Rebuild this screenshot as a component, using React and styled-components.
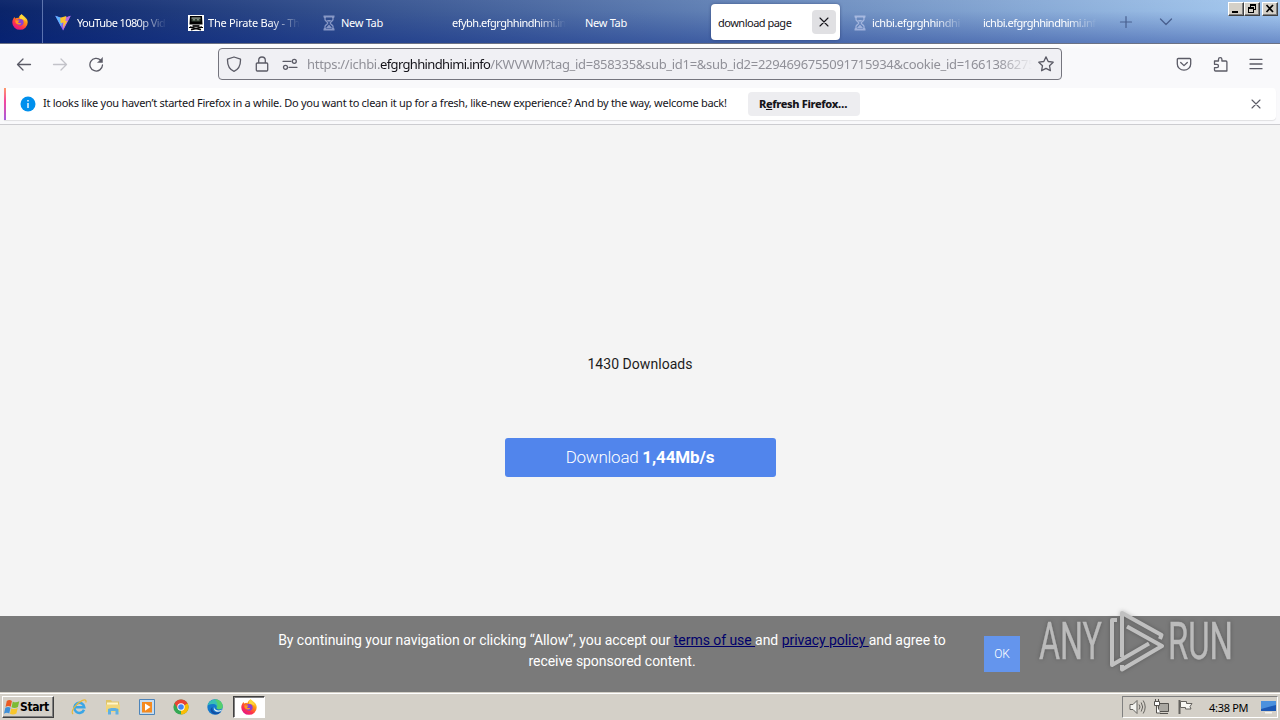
import React from "react";
import styled, { createGlobalStyle, css } from "styled-components";

const GlobalStyle = createGlobalStyle`
  * { box-sizing: border-box; }
  html, body { margin: 0; padding: 0; background: #f4f4f4; }
  body { overflow: hidden; }
`;

const uiFont = '"Noto Sans", "Open Sans", sans-serif';

const Screen = styled.div`
  position: relative;
  width: 1280px;
  height: 720px;
  display: flex;
  flex-direction: column;
  overflow: hidden;
  font-family: ${uiFont};
  font-size: 11px;
  color: #15141a;
`;

const TabStrip = styled.header`
  height: 44px;
  flex: none;
  display: flex;
  border-bottom: 1px solid #6c7284;
  background:
    linear-gradient(180deg, rgba(255, 255, 255, 0.03) 0%, rgba(0, 20, 110, 0) 25%, rgba(0, 30, 130, 0.36) 100%),
    linear-gradient(90deg, #0a246a 0%, #a6caf0 100%);
`;

const PinnedTab = styled.div`
  width: 43px;
  height: 43px;
  padding: 14px 0 0 12px;
  border-right: 1px solid rgba(170, 190, 235, 0.5);
`;

const Tab = styled.div`
  width: 133px;
  height: 43px;
  display: flex;
  align-items: center;
  padding: 2px 9px 0 ${(p) => (p.$icon ? 12 : 10)}px;
  gap: ${(p) => p.$gap || 4}px;
  color: #fff;
  white-space: nowrap;
  overflow: hidden;
`;

const TabLabel = styled.span`
  flex: 1;
  overflow: hidden;
  line-height: 18px;
  letter-spacing: ${(p) => p.$ls || 0}px;
  ${(p) =>
    p.$fade &&
    css`
      mask-image: linear-gradient(90deg, #000 calc(100% - 30px), transparent 100%);
    `}
`;

const ActiveTab = styled.div`
  width: 129px;
  height: 36px;
  margin: 4px 0 0 3px;
  padding: 0 4px 0 7px;
  display: flex;
  align-items: center;
  justify-content: space-between;
  background: #fff;
  color: #15141a;
  border-radius: 4px;
  letter-spacing: -0.5px;
  box-shadow: 0 0 3px rgba(20, 30, 80, 0.5);
`;

const TabClose = styled.div`
  width: 24px;
  height: 24px;
  display: grid;
  place-items: center;
  border-radius: 4px;
  background: #e0e0e3;
`;

const StripButton = styled.div`
  width: 40px;
  height: 43px;
  display: grid;
  place-items: center;
  padding-top: 1px;
`;

const WindowButtons = styled.div`
  margin: 2px 2px 0 auto;
  display: flex;
  height: 14px;
`;

const WindowButton = styled.div`
  width: 16px;
  height: 14px;
  margin-left: ${(p) => (p.$apart ? 2 : 0)}px;
  background: #d4d0c8;
  border: 1px solid;
  border-color: #fff #404040 #404040 #fff;
  box-shadow: inset -1px -1px #808080;
  svg { display: block; }
`;

const Toolbar = styled.nav`
  height: 44px;
  flex: none;
  display: flex;
  align-items: center;
  padding: 0 16px 4px;
  background: linear-gradient(180deg, #fff 0, #f9f9fb 5px);
  color: #5b5b66;
`;

const NavButtons = styled.div`
  width: 202px;
  display: flex;
  gap: 20px;
`;

const UrlBar = styled.div`
  width: 844px;
  height: 32px;
  display: flex;
  align-items: center;
  padding: 0 7px;
  background: #f0f0f4;
  border: 1px solid #75757e;
  border-radius: 4px;
`;

const UrlIcons = styled.div`
  display: flex;
  gap: 12px;
  width: 81px;
  flex: none;
`;

const UrlText = styled.div`
  flex: 1;
  margin-right: 6px;
  overflow: hidden;
  white-space: nowrap;
  font-size: 13px;
  line-height: 20px;
  color: #909098;
  letter-spacing: ${(p) => p.$ls}px;
  mask-image: linear-gradient(90deg, #000 calc(100% - 34px), transparent 100%);
  b { font-weight: 400; color: #15141a; letter-spacing: -0.65px; }
`;

const ToolbarActions = styled.div`
  margin-left: auto;
  display: flex;
  gap: 20px;
`;

const Notification = styled.section`
  height: 37px;
  flex: none;
  padding: 0 4px 4px;
  background: #f9f9fb;
  border-bottom: 1px solid #ccccd0;
`;

const NotificationCard = styled.div`
  height: 32px;
  display: flex;
  align-items: center;
  background: #fff;
  border-radius: 0 4px 4px 0;
  box-shadow: 0 1px 1px rgba(0, 0, 0, 0.1);
`;

const AccentBar = styled.i`
  width: 2px;
  height: 32px;
  background: linear-gradient(180deg, #ff9a6a 0%, #f5479c 40%, #a55bdd 100%);
`;

const InfoBadge = styled.div`
  width: 16px;
  height: 16px;
  margin: 0 7px 0 14px;
  display: grid;
  place-items: center;
`;

const NoticeText = styled.span`
  width: 705px;
  padding-bottom: 3px;
  white-space: nowrap;
  letter-spacing: ${(p) => p.$ls}px;
`;

const RefreshButton = styled.button`
  width: 112px;
  height: 24px;
  padding: 0;
  border: 0;
  border-radius: 4px;
  background: #ededf0;
  color: #15141a;
  font: 800 11px/24px ${uiFont};
  letter-spacing: -0.35px;
  padding-right: 2px;
`;

const DismissButton = styled.div`
  width: 16px;
  height: 16px;
  margin: 0 12px 0 auto;
`;

const Page = styled.main`
  flex: 1;
  display: flex;
  flex-direction: column;
  align-items: center;
  background: #f4f4f4;
  font-family: Roboto, sans-serif;
`;

const DownloadCount = styled.p`
  margin: 229px 0 0;
  font-size: 14px;
  line-height: 20px;
  color: #1c1c1c;
  letter-spacing: 0.05px;
`;

const DownloadButton = styled.button`
  width: 271px;
  height: 39px;
  margin-top: 64px;
  padding: 0;
  border: 0;
  border-radius: 3px;
  background: #5185ec;
  color: #fff;
  font: 300 17px/39px Roboto, sans-serif;
  letter-spacing: -0.25px;
  b { font-weight: 700; letter-spacing: -0.12px; }
`;

const ConsentBar = styled.footer`
  height: 76px;
  margin-top: auto;
  width: 100%;
  display: flex;
  padding: 0 0 0 260px;
  background: #7a7a7a;
  color: #fff;
`;

const ConsentText = styled.p`
  width: 704px;
  margin: 14px 20px 0 0;
  text-align: center;
  font-size: 14px;
  line-height: 21px;
  letter-spacing: ${(p) => p.$ls}px;
  span { display: block; white-space: pre; }
  a { color: #00006a; text-decoration: underline; }
`;

const OkButton = styled.button`
  width: 36px;
  height: 36px;
  margin-top: 20px;
  padding: 0;
  border: 0;
  background: #6495ed;
  color: #fff;
  font: 300 12px/36px Roboto, sans-serif;
`;

const Watermark = styled.svg`
  position: absolute;
  left: 1030px;
  top: 604px;
  filter: drop-shadow(0 0 2px rgba(0, 0, 0, 0.25));
`;

const Taskbar = styled.div`
  height: 28px;
  flex: none;
  display: flex;
  align-items: center;
  padding: 1px 2px 0;
  background: #d4d0c8;
  border-top: 1px solid #d4d0c8;
  box-shadow: inset 0 1px #fff;
`;

const StartButton = styled.div`
  width: 52px;
  height: 22px;
  display: flex;
  align-items: center;
  padding-left: 1px;
  color: #000;
  font: 700 12px/18px "DejaVu Sans Condensed", "DejaVu Sans", sans-serif;
  letter-spacing: -0.4px;
  border: 1px solid;
  border-color: #fff #404040 #404040 #fff;
  box-shadow: inset -1px -1px #808080;
`;

const QuickLaunch = styled.div`
  display: flex;
  align-items: center;
  gap: 18px;
  margin: 0 10px 0 17px;
`;

const TaskButton = styled.div`
  width: 32px;
  height: 22px;
  display: grid;
  place-items: center;
  background: #fff;
  border: 1px solid;
  border-color: #404040 #fff #fff #404040;
  box-shadow: inset 1px 1px #808080;
`;

const Tray = styled.div`
  margin: 0 0 0 auto;
  width: 156px;
  height: 22px;
  display: flex;
  align-items: center;
  gap: 7px;
  padding-left: 6px;
  border: 1px solid;
  border-color: #808080 #fff #fff #808080;
  color: #000;
  font-size: 11px;
  letter-spacing: -0.3px;
  svg { flex: none; }
`;

const Clock = styled.span`
  margin-left: 8px;
  width: 44px;
  white-space: nowrap;
`;

const Line = ({ size = 16, width = 1.3, color = "currentColor", children, ...rest }) => (
  <svg width={size} height={size} viewBox="0 0 16 16" fill="none" stroke={color} strokeWidth={width} strokeLinecap="round" strokeLinejoin="round" {...rest}>
    {children}
  </svg>
);

const FirefoxIcon = ({ id }) => (
  <svg width="16" height="16" viewBox="0 0 16 16">
    <defs>
      <linearGradient id={id} x1="0.85" y1="0.05" x2="0.25" y2="0.95">
        <stop offset="0" stopColor="#fff44f" />
        <stop offset="0.35" stopColor="#ff980e" />
        <stop offset="0.7" stopColor="#ff3647" />
        <stop offset="1" stopColor="#e31587" />
      </linearGradient>
    </defs>
    <path d="M9.6 0.2c1 1 2.2 1.600 3 2.500C15 4.600 15.700 6.400 15.700 8.400a7.700 7.400 0 0 1-15.400 0C0.300 6 1.300 4.300 2.600 2.900l0.600 1.500 1.900-0.700 1.300 0.500C7 2.300 8.200 1 9.600 0.200z" fill={`url(#${id})`} />
    <circle cx="8.200" cy="8.300" r="3.400" fill="#8a3fd6" />
    <path d="M3.500 6.200l3.700 0.200c0.600 0.600-0.900 1.200-1.200 1.800 0.600 1.300 2.300 0.600 3.200 1-0.600 1.700-3.500 1.800-5 0.200C3.300 8.500 3.200 7 3.500 6.200z" fill="#ff9a1f" />
    <path d="M9.600 0.200c0.200 2.200 3.400 3 4 6.600C11.900 4.600 9 5.200 8 4.400 8 2.400 8.600 1 9.600 0.200z" fill="#ffd93b" />
  </svg>
);

const VividIcon = () => (
  <svg width="16" height="16" viewBox="0 0 16 16">
    <path d="M0.300 0.800L8 15.400 15.700 0.800 8 3.600z" fill="#8b62f0" />
    <path d="M8 3.600L15.700 0.800 8 15.400z" fill="#bd6bdc" />
    <path d="M0.300 0.800L8 3.600v2L6 11.600z" fill="#5cb5ff" />
    <path d="M5.300 2.800L11.400 1 10.300 6h2L8 13l0.600-5.500-3 0.600z" fill="#ffc52b" />
  </svg>
);

const PirateIcon = () => (
  <svg width="16" height="16" viewBox="0 0 16 16">
    <path d="M0 0h16v16H0z" fill="#fff" />
    <path d="M2 1h12l0.500 8.500h-13z" fill="#000" />
    <path d="M3.500 2.700h9v3.800h-9z" fill="#39463a" />
    <path d="M3.500 3h9" stroke="#cfd6cf" strokeWidth="0.800" />
    <path d="M5 4.800h2M9 4.800h2" stroke="#b8c0b8" strokeWidth="0.800" />
    <path d="M4.500 10h7v2h-7z" fill="#222" />
    <path d="M2 12l11 2.800M14 12L3 14.800" stroke="#000" strokeWidth="1.500" />
    <path d="M1 12.500h2M13 12.500h2" stroke="#000" />
  </svg>
);

const Hourglass = () => (
  <svg width="16" height="16" viewBox="0 0 16 16" fill="none" stroke="rgba(225,230,255,0.5)" strokeWidth="1.300">
    <path d="M2.500 1.500h11M2.500 14.500h11" strokeWidth="2" />
    <path d="M4 2v2.500c0 1.500 2.800 2.200 2.800 3.500S4 10 4 11.500V14M12 2v2.500c0 1.500-2.800 2.200-2.800 3.500S12 10 12 11.500V14" />
    <path d="M5.500 5h5L8 7zM8 9.500l3 3.500H5z" fill="rgba(225,230,255,0.5)" stroke="none" />
  </svg>
);

const tabsBefore = [
  { label: "YouTube 1080p Vid", icon: <VividIcon />, gap: 6, fade: true, spacing: -0.6 },
  { label: "The Pirate Bay - Th", icon: <PirateIcon />, fade: true, spacing: -0.22 },
  { label: "New Tab", icon: <Hourglass />, spacing: -0.3 },
  { label: "efybh.efgrghhindhimi.in", fade: true, spacing: -0.5 },
  { label: "New Tab", spacing: -0.3 },
];
const tabsAfter = [
  { label: "ichbi.efgrghhindhi", icon: <Hourglass />, fade: true, spacing: -0.4 },
  { label: "ichbi.efgrghhindhimi.inf", fade: true, spacing: -0.5 },
];

const TabItem = ({ tab }) => (
  <Tab $icon={!!tab.icon} $gap={tab.gap}>
    {tab.icon}
    <TabLabel $fade={tab.fade} $ls={tab.spacing}>{tab.label}</TabLabel>
  </Tab>
);

const IeIcon = () => (
  <svg width="16" height="16" viewBox="0 0 16 16" fill="none">
    <path d="M13 10.700A5 5 0 1 1 13.300 8.300H4.600" stroke="#3aa6e6" strokeWidth="2.500" />
    <path d="M2.200 15C-1 13.500 4 5 11 1.600c3-1.400 4.800-0.500 3.700 2" stroke="#e8b93a" strokeWidth="1.200" />
  </svg>
);

const FolderIcon = () => (
  <svg width="16" height="16" viewBox="0 0 16 16">
    <path d="M1 1h5l1 1.500h7V13H1z" fill="#dfc468" />
    <path d="M2 3.500h11v3H2z" fill="#fff6c9" />
    <path d="M1 5.500h14v7.500H1z" fill="#f0d67c" />
    <path d="M3 15.500v-5c0-2 10.500-2 10.500 0v5H10.500v-3.500h-4.500v3.500z" fill="#5fb0e2" />
  </svg>
);

const PlayerIcon = () => (
  <svg width="16" height="16" viewBox="0 0 16 16">
    <path d="M0.500 0.500h15v15H0.500z" fill="#c6dcf0" stroke="#4d84b9" />
    <path d="M3 3h10v10.500H3z" fill="#f58a1f" />
    <path d="M6 4.500L11.500 8 6 11.700z" fill="#fff" />
  </svg>
);

const ChromeIcon = () => (
  <svg width="16" height="16" viewBox="0 0 16 16">
    <circle cx="8" cy="8" r="7.600" fill="#34a853" />
    <path d="M8 8L1.420 4.200A7.600 7.600 0 0 1 14.580 4.200z" fill="#ea4335" />
    <path d="M8 8l6.580-3.800A7.600 7.600 0 0 1 8 15.600z" fill="#fbbc05" />
    <path d="M1.420 4.200L5 10l3-2 6.580-3.800z" fill="#ea4335" />
    <circle cx="8" cy="8" r="3.700" fill="#fff" />
    <circle cx="8" cy="8" r="2.800" fill="#4285f4" />
  </svg>
);

const EdgeIcon = () => (
  <svg width="16" height="16" viewBox="0 0 16 16">
    <circle cx="8" cy="8" r="7.700" fill="#1479cc" />
    <path d="M0.400 7A7.700 7.700 0 0 1 15.700 7.500C15.700 11 10 11 9.600 9c1-2-1-4.500-4-4C2.500 5 0.800 6 0.400 7z" fill="#38bfb4" />
    <path d="M8 0.300c5 0 8 4 7.700 7.400C15.500 11 10 11 9.600 9 12 5 9 2 8 0.300z" fill="#55cf6d" />
    <path d="M5.500 8c-1 4 3 7 8.500 4.500C11 17 4 16 3.500 11 3.500 9.500 4.500 8.500 5.500 8z" fill="#124fa5" />
    <path d="M7 8c0.300 3 4.500 4.500 8 2.500l-0.700 1.500C10 14 6 12 7 8z" fill="#e4eef3" />
  </svg>
);

const WindowsFlag = () => (
  <svg width="16" height="16" viewBox="0.500 1.200 15.500 13" preserveAspectRatio="none">
    <path d="M3.200 2.800C5 1.500 7 2 8.200 2.800L7 7.500C5.500 6.700 3.700 6.600 2 7.600z" fill="#ea5a24" />
    <path d="M9 3.200c2 1 4 0.900 6.300-0.200L14 7.700c-2 1-4.200 1.200-6.200 0.200z" fill="#7dbb35" />
    <path d="M1.800 8.400C3.500 7.400 5.500 7.500 6.800 8.300L5.600 13C4 12.200 2.200 12.300 0.500 13.200z" fill="#3f8fd8" />
    <path d="M7.600 8.700c2 1 4 0.900 6.200-0.200L12.500 13c-2 1-4.200 1.200-6.200 0.200z" fill="#f8c62b" />
  </svg>
);

export default function App() {
  return (
    <Screen>
      <GlobalStyle />
      <TabStrip>
        <PinnedTab><FirefoxIcon id="fx-pinned" /></PinnedTab>
        {tabsBefore.map((t, i) => <TabItem key={i} tab={t} />)}
        <ActiveTab>
          <span>download page</span>
          <TabClose>
            <Line width={1.1}><path d="M4 4l8 8M12 4l-8 8" /></Line>
          </TabClose>
        </ActiveTab>
        {tabsAfter.map((t, i) => <TabItem key={i} tab={t} />)}
        <StripButton>
          <Line color="#49608f" width={1.200}><path d="M8 2.500v11M2.500 8h11" /></Line>
        </StripButton>
        <StripButton>
          <Line color="#49608f" width={1.300}><path d="M2.500 5l5.500 5.500L13.500 5" /></Line>
        </StripButton>
        <WindowButtons>
          <WindowButton>
            <svg width="14" height="12"><path d="M3 8h6v2H3z" /></svg>
          </WindowButton>
          <WindowButton>
            <svg width="14" height="12" fill="none" stroke="#000" shapeRendering="crispEdges">
              <path d="M5 1h6v2H5z" fill="#000" stroke="none" />
              <path d="M5.500 3v1M10.500 3v3.500H9" />
              <path d="M3 4h6v2H3z" fill="#000" stroke="none" />
              <path d="M3.500 6v3.500h5V6" />
            </svg>
          </WindowButton>
          <WindowButton $apart>
            <svg width="14" height="12" stroke="#000" strokeWidth="1.700"><path d="M3.500 2l6.500 7M10 2L3.500 9" /></svg>
          </WindowButton>
        </WindowButtons>
      </TabStrip>

      <Toolbar>
        <NavButtons>
          <Line><path d="M14.500 8.500h-13M7 3L1.500 8.500 7 14" /></Line>
          <Line color="#c3c3c9"><path d="M1.500 8.500h13M9 3l5.500 5.500L9 14" /></Line>
          <Line>
            <path d="M14.500 9A6.300 6.300 0 1 1 12.700 4.300" />
            <path d="M14.500 1.800v4.700H9.800z" fill="currentColor" strokeWidth="0.500" />
          </Line>
        </NavButtons>
        <UrlBar>
          <UrlIcons>
            <Line><path d="M8 1L14.500 3.200C14.700 9 12.500 13.500 8 15.300 3.500 13.500 1.300 9 1.500 3.200z" /></Line>
            <Line><path d="M3.300 7h9.400a1 1 0 0 1 1 1v6a1 1 0 0 1-1 1H3.300a1 1 0 0 1-1-1V8a1 1 0 0 1 1-1zM4.700 7V4.300a3.300 3.300 0 0 1 6.600 0V7" /></Line>
            <Line><path d="M1 5.300h8M7 11.300h8" /><circle cx="12.300" cy="5.300" r="2" /><circle cx="3.500" cy="11.300" r="2" /></Line>
          </UrlIcons>
          <UrlText $ls={-0.3}>
            https://ichbi.<b>efgrghhindhimi.info</b>/KWVWM?tag_id=858335&amp;sub_id1=&amp;sub_id2=2294696755091715934&amp;cookie_id=1661386275
          </UrlText>
          <Line><path d="M8 0.900l2.200 4.600 5 0.700-3.700 3.500 0.900 5L8 12.400l-4.400 2.300 0.900-5L0.800 6.200l5-0.700z" /></Line>
        </UrlBar>
        <ToolbarActions>
          <Line>
            <path d="M2.300 2.500h11.400a1 1 0 0 1 1 1V8a6.700 6.200 0 0 1-13.400 0V3.500a1 1 0 0 1 1-1z" />
            <path d="M4.700 6.500L8 9.600l3.300-3.100" />
          </Line>
          <Line viewBox="-1 -0.500 16 16">
            <path d="M1.500 4.500h4V2.800a1.700 1.700 0 0 1 3.400 0v1.700h4a1 1 0 0 1 1 1v9H2.500a1 1 0 0 1-1-1v-2.300h2.300a1.700 1.700 0 0 0 0-3.400H1.500z" />
          </Line>
          <Line><path d="M2 3.300h12M2 8h12M2 12.700h12" /></Line>
        </ToolbarActions>
      </Toolbar>

      <Notification>
        <NotificationCard>
          <AccentBar />
          <InfoBadge>
            <svg width="16" height="16"><circle cx="8" cy="8" r="7.500" fill="#0090ed" /><path d="M8 7v5M8 4v1.500" stroke="#fff" strokeWidth="1.400" /></svg>
          </InfoBadge>
          <NoticeText $ls={-0.27}>
            It looks like you haven’t started Firefox in a while. Do you want to clean it up for a fresh, like-new experience? And by the way, welcome back!
          </NoticeText>
          <RefreshButton>R<u>e</u>fresh Firefox…</RefreshButton>
          <DismissButton>
            <Line color="#5b5b66" width={1.100}><path d="M4 4l8 8M12 4l-8 8" /></Line>
          </DismissButton>
        </NotificationCard>
      </Notification>

      <Page>
        <DownloadCount>1430 Downloads</DownloadCount>
        <DownloadButton>Download <b>1,44Mb/s</b></DownloadButton>
        <ConsentBar>
          <ConsentText $ls={-0.045}>
            <span>By continuing your navigation or clicking “Allow”, you accept our <a>terms of use </a>and <a>privacy policy </a>and agree to</span>
            <span>receive sponsored content.</span>
          </ConsentText>
          <OkButton>OK</OkButton>
        </ConsentBar>
      </Page>

      <Taskbar>
        <StartButton><WindowsFlag />Start</StartButton>
        <QuickLaunch>
          <IeIcon /><FolderIcon /><PlayerIcon /><ChromeIcon /><EdgeIcon />
        </QuickLaunch>
        <TaskButton><FirefoxIcon id="fx-task" /></TaskButton>
        <Tray>
          <svg width="17" height="16" viewBox="0 0 17 16" fill="#f4f4f0" stroke="#65635f" strokeWidth="1">
            <path d="M1 5.500h3l4-4v13l-4-4H1z" />
            <path d="M10 5.500q2 2.500 0 5M12.200 3.500q3 4.500 0 9M14.200 1.500q4 6.500 0 13" fill="none" />
          </svg>
          <svg width="17" height="16" viewBox="0 0 17 16" fill="#f4f4f0" stroke="#54524e">
            <path d="M5.500 4.500h10v8h-10z" fill="#a9a7a1" /><path d="M7 14.500h8" />
            <path d="M1.500 2.500h5v4h-5zM2.500 0v2M5.500 0v2M3.500 7v7h4" fill="#fff" />
          </svg>
          <svg width="17" height="16" viewBox="0 0 17 16" fill="#f7f7f3" stroke="#65635f">
            <path d="M2.500 1v14" strokeWidth="2" /><path d="M3.500 2.500h6v2h5.500l-2 3 1 2.500H8.500v-1.500h-5z" />
          </svg>
          <Clock>4:38 PM</Clock>
          <svg width="17" height="16" viewBox="0 0 17 16">
            <path d="M1 2h15v10H1z" fill="#1c58b4" /><path d="M1 2h15v4L1 10z" fill="#4b91de" /><path d="M5 13h7v1.500H5z" fill="#f4f4f0" />
          </svg>
        </Tray>
      </Taskbar>

      <Watermark width="220" height="76" viewBox="0 0 220 76" fill="#bbb">
        <g fontFamily="Roboto, sans-serif" fontSize="51" fontWeight="400" stroke="#bbb" strokeWidth="0.400">
          <text x="9" y="55" textLength="63" lengthAdjust="spacingAndGlyphs">ANY</text>
          <text x="138" y="55" textLength="65" lengthAdjust="spacingAndGlyphs">RUN</text>
        </g>
        <g fill="none" stroke="#c0c0c0" strokeWidth="4" strokeLinejoin="round">
          <path d="M92 53V9l39.500 22-1.500 4" />
          <path d="M97 22.500L132 42 92 65.500V61" />
          <path d="M87 16h-5v45l37-21.500" />
        </g>
      </Watermark>
    </Screen>
  );
}
